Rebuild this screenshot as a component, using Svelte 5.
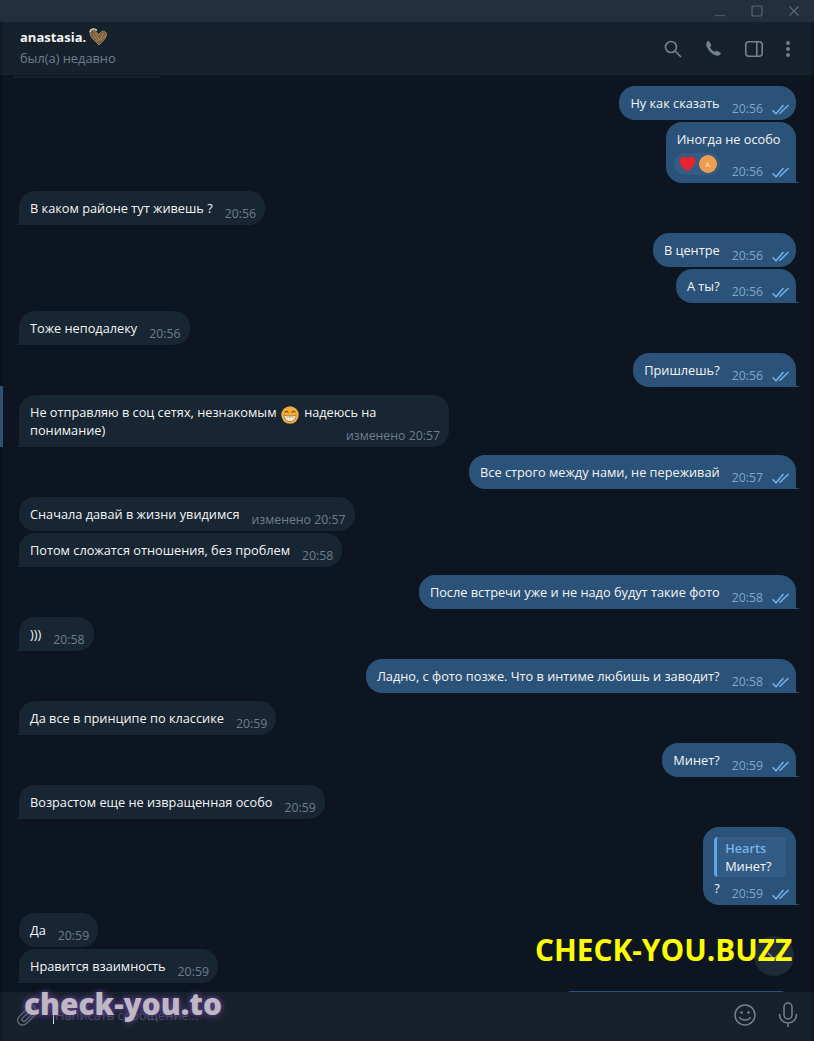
<script>
  const groups = [
    { side: 'r', items: [{ t: 'Ну как сказать', time: '20:56' }, { t: 'Иногда не особо', time: '20:56', react: true }] },
    { side: 'l', items: [{ t: 'В каком районе тут живешь ?', time: '20:56' }] },
    { side: 'r', items: [{ t: 'В центре', time: '20:56' }, { t: 'А ты?', time: '20:56' }] },
    { side: 'l', items: [{ t: 'Тоже неподалеку', time: '20:56' }] },
    { side: 'r', items: [{ t: 'Пришлешь?', time: '20:56' }] },
    { side: 'l', active: true, items: [{ multi: true, time: 'изменено 20:57' }] },
    { side: 'r', items: [{ t: 'Все строго между нами, не переживай', time: '20:57' }] },
    { side: 'l', items: [{ t: 'Сначала давай в жизни увидимся', time: 'изменено 20:57' }, { t: 'Потом сложатся отношения, без проблем', time: '20:58' }] },
    { side: 'r', items: [{ t: 'После встречи уже и не надо будут такие фото', time: '20:58' }] },
    { side: 'l', items: [{ t: ')))', time: '20:58' }] },
    { side: 'r', items: [{ t: 'Ладно, с фото позже. Что в интиме любишь и заводит?', time: '20:58' }] },
    { side: 'l', items: [{ t: 'Да все в принципе по классике', time: '20:59' }] },
    { side: 'r', items: [{ t: 'Минет?', time: '20:59' }] },
    { side: 'l', items: [{ t: 'Возрастом еще не извращенная особо', time: '20:59' }] },
    { side: 'r', items: [{ t: '?', time: '20:59', reply: true }] },
    { side: 'l', items: [{ t: 'Да', time: '20:59' }, { t: 'Нравится взаимность', time: '20:59' }] }
  ];
</script>

{#snippet checks()}
  <svg class="checks" viewBox="0 0 18 11" width="18" height="11" fill="none" stroke="currentColor" stroke-width="1.600">
    <path d="M0.600 6.200 L4 9.800 L11.500 1" /><path d="M7.500 9.800 L16.500 1" />
  </svg>
{/snippet}

<div class="app">
  <div class="titlebar">
    <svg width="12" height="12" viewBox="0 0 12 12"><path d="M1 10.500h10" stroke="#4a5866" stroke-width="1.200" /></svg>
    <svg width="12" height="12" viewBox="0 0 12 12"><rect x="1" y="1" width="10" height="10" rx="1.500" fill="none" stroke="#5b6875" stroke-width="1.200" /></svg>
    <svg width="12" height="12" viewBox="0 0 12 12"><path d="M1.500 1.500l9 9M10.500 1.500l-9 9" stroke="#5b6875" stroke-width="1.200" /></svg>
  </div>

  <header class="header">
    <div class="who">
      <div class="name">anastasia.
        <svg class="heart" width="20" height="19" viewBox="0 0 20 19">
          <path d="M11 18 C7 14 2 10 2 6 C2 3 6 2 8 4.500 C9 5.700 10 7 10.500 8 C12 5 15 3 17.500 5 C20 7.500 17 12 14.500 14.500 C13 16 12 17 11 18Z" fill="#7c5a36" stroke="#b9aa94" stroke-width="0.700" />
          <path d="M5 7 L10 15 M7 5.500 L12 14 M15 6 L11 14 M17.500 8 L13 13" stroke="#a98a62" stroke-width="1" />
          <path d="M1.800 5 C2.500 1.500 6.500 0.700 9 3.500" stroke="#e4e2dc" stroke-width="1.300" fill="none" />
        </svg>
      </div>
      <div class="status">был(а) недавно</div>
    </div>
    <div class="tools">
      <svg width="18" height="18" viewBox="0 0 18 18" fill="none" stroke="#75828f" stroke-width="1.600"><circle cx="7" cy="7" r="5.500" /><path d="M11 11l6 6" /></svg>
      <svg width="17" height="17" viewBox="0 0 20 20" fill="#75828f"><path d="M4.800 1.500 L7.300 5.800 C7.500 6.200 7.400 6.600 7.100 6.900 L5.800 8.200 C6.800 10.700 9 12.900 11.600 14 L13 12.700 C13.300 12.400 13.700 12.300 14.100 12.500 L18.300 14.900 C18.700 15.100 18.800 15.600 18.600 16 C17.700 17.700 16.200 18.600 14.700 18.400 C8.500 17.500 2.400 11.400 1.500 5.200 C1.300 3.600 2.300 2.100 4 1.300 C4.300 1.200 4.600 1.300 4.800 1.500Z" /></svg>
      <svg width="18" height="16" viewBox="0 0 18 16" fill="none" stroke="#75828f" stroke-width="1.600"><rect x="0.800" y="0.800" width="16.400" height="14.400" rx="3" /><path d="M11.800 1v14" /></svg>
      <svg width="4" height="16" viewBox="0 0 4 16" fill="#75828f"><circle cx="2" cy="2" r="1.900" /><circle cx="2" cy="8" r="1.900" /><circle cx="2" cy="14" r="1.900" /></svg>
    </div>
  </header>

  <div class="edge left"></div>
  <div class="edge right"></div>

  <main class="feed">
    <div class="peek"></div>
    {#each groups as g}
      <section class="group {g.side}" class:active={g.active}>
        {#each g.items as m}
          <div class="bubble" class:withreply={m.reply}>
            {#if m.reply}
              <div class="reply"><b>Hearts</b><span>Минет?</span></div>
              <div class="replyfoot"><span class="txt q">{m.t}</span><span class="meta"><span class="time">{m.time}</span>{@render checks()}</span></div>
            {:else if m.multi}
              <div class="txt wide">Не отправляю в соц сетях, незнакомым <svg class="emoji" width="18" height="18" viewBox="0 0 18 18"><circle cx="9" cy="9" r="8.700" fill="#f2ad3a" /><path d="M3 9 C6 10.500 12 10.500 15 9 C14.800 13.500 12 15.500 9 15.500 C6 15.500 3.200 13.500 3 9Z" fill="#fdf6e8" stroke="#8a5a1c" stroke-width="0.700" /><path d="M3 11.600 H15 M6 10 V15 M9 10.300 V15.500 M12 10 V15" stroke="#c9b79a" stroke-width="0.500" /><path d="M3.800 6.800 C4.500 4.800 6.500 4.800 7.200 6.800 M10.800 6.800 C11.500 4.800 13.500 4.800 14.200 6.800" fill="none" stroke="#6d4413" stroke-width="1.100" /></svg> надеюсь на<br />понимание)</div>
              <div class="metarow"><span class="time">{m.time}</span></div>
            {:else if m.react}
              <div class="txt solo">{m.t}</div>
              <div class="reactrow">
                <div class="pill">
                  <svg width="17" height="16" viewBox="0 0 16 15"><path d="M8 14.500 C4 11 .5 8.500 .5 4.800 C.5 2.200 2.500 .5 4.500 .5 C6 .5 7.300 1.300 8 2.700 C8.700 1.300 10 .5 11.500 .5 C13.500 .5 15.500 2.200 15.500 4.800 C15.500 8.500 12 11 8 14.500Z" fill="#e8232f" /></svg>
                  <span class="avatar">А</span>
                </div>
                <span class="meta low"><span class="time">{m.time}</span>{@render checks()}</span>
              </div>
            {:else}
              <div class="line"><span class="txt">{m.t}</span><span class="meta"><span class="time">{m.time}</span>{#if g.side === 'r'}{@render checks()}{/if}</span></div>
            {/if}
          </div>
        {/each}
      </section>
    {/each}
    <div class="stub"></div>
    <div class="scroll">
      <svg width="16" height="10" viewBox="0 0 16 10" fill="none" stroke="#8996a3" stroke-width="1.500"><path d="M2 2l6 6 6-6" /></svg>
    </div>
    <div class="mark-yellow">CHECK-YOU.BUZZ</div>
  </main>

  <footer class="composer">
    <svg class="clip" width="24" height="24" viewBox="0 0 24 24" fill="none" stroke="#5d6a77" stroke-width="1.500"><path d="M20.500 10.500 L11 20 C8.500 22.500 4.700 22.500 3 20.500 C1.200 18.500 1.500 15.300 3.500 13.300 L13 3.800 C14.600 2.200 17 2.200 18.500 3.700 C20 5.200 19.800 7.500 18.300 9 L9.500 17.800 C8.600 18.700 7.300 18.700 6.500 17.900 C5.700 17 5.900 15.800 6.700 15 L14.500 7.200" /></svg>
    <span class="caret"></span>
    <span class="placeholder">Написать сообщение...</span>
    <svg class="smile" width="24" height="24" viewBox="0 0 24 24" fill="none" stroke="#75828f" stroke-width="1.500"><circle cx="12" cy="12" r="10" /><circle cx="8.500" cy="9.500" r="1.300" fill="#75828f" stroke="none" /><circle cx="15.500" cy="9.500" r="1.300" fill="#75828f" stroke="none" /><path d="M6.500 14 C8 18 16 18 17.500 14" /></svg>
    <svg class="mic" width="22" height="26" viewBox="0 0 22 26" fill="none" stroke="#75828f" stroke-width="1.500"><rect x="7" y="1" width="8" height="16" rx="4" /><path d="M2.500 12 C2.500 24 19.500 24 19.500 12 M11 21v4" /></svg>
  </footer>
  <div class="mark-glow">check-you.to</div>
</div>

<style>
  :global(body) { margin: 0; background: #0d1520; }
  .app {
    width: 814px; height: 1041px; overflow: hidden; display: flex; flex-direction: column; position: relative;
    font-family: "Open Sans", "Noto Sans", sans-serif; font-size: 12.750px; color: #f5f5f5; background: #0d1520;
  }
  .titlebar {
    height: 22px; flex: none; display: flex; justify-content: flex-end; align-items: center; gap: 25px; padding-right: 14px; box-sizing: border-box;
    background: #232f3c;
  }
  .header {
    height: 54px; flex: none; display: flex; justify-content: space-between; align-items: center;
    padding: 0 24px 0 20px; background: #17212b; border-bottom: 1px solid #10171f; box-sizing: border-box;
  }
  .edge { position: absolute; top: 22px; bottom: 0; width: 3px; background: rgba(5, 10, 16, 0.3); }
  .edge.left { left: 0; }
  .edge.right { right: 0; }
  .who { margin-top: -2px; }
  .name { font-weight: 700; font-size: 13px; line-height: 20px; display: flex; align-items: center; gap: 2px; }
  .heart { margin-top: -3px; height: 19px; margin-bottom: -2px; }
  .status { font-size: 12.800px; line-height: 20px; color: #6d7f8f; margin-top: 1px; }
  .tools { display: flex; align-items: center; gap: 23px; }
  .feed { flex: 1; position: relative; overflow: hidden; padding: 10px 0 0; box-sizing: border-box; }
  .peek { position: absolute; left: 14px; top: 0; width: 146px; height: 2px; background: #17212b; border-radius: 0 0 6px 0; }
  .group { display: flex; flex-direction: column; gap: 2px; margin-bottom: 8px; position: relative; }
  .group.l { align-items: flex-start; padding-left: 19px; }
  .group.r { align-items: flex-end; padding-right: 18px; }
  .group.active::before { content: ""; position: absolute; left: 0; top: -9px; bottom: 0; width: 3px; background: #2b5278; }
  .bubble { min-height: 34px; box-sizing: border-box; padding: 8px 9px 8px 11px; border-radius: 16px; position: relative; }
  .l .bubble { background: #182533; }
  .r .bubble { background: #2b5278; padding-right: 6px; }
  .l .bubble:last-child { border-bottom-left-radius: 0; }
  .l .bubble:last-child::after { content: ""; position: absolute; bottom: 0; left: -5px; width: 5px; height: 10px; background: radial-gradient(circle at 0 0, transparent 9.500px, #182533 10px); }
  .r .bubble:last-child { border-bottom-right-radius: 0; }
  .r .bubble:last-child::after { content: ""; position: absolute; bottom: 0; right: -5px; width: 5px; height: 10px; background: radial-gradient(circle at 100% 0, transparent 9.500px, #2b5278 10px); }
  .line { display: flex; height: 18px; }
  .txt { line-height: 18px; white-space: nowrap; }
  .meta { display: inline-flex; align-items: center; margin-left: 12px; margin-top: 8px; height: 14px; flex: none; }
  .meta.low { margin-top: 0; margin-bottom: -4px; }
  .time { font-size: 12.300px; line-height: 14px; color: #6d7f8f; }
  .r .time { color: #7da8d3; }
  .checks { color: #6cb0ea; margin-left: 9px; flex: none; }
  .emoji { vertical-align: -4px; margin: -3px 2px -3px 1px; }
  .metarow { display: flex; justify-content: flex-end; margin-top: -10px; height: 14px; margin-bottom: -4px; }
  .wide { width: 410px; }
  .solo { padding-right: 8px; }
  .reactrow { display: flex; justify-content: space-between; align-items: flex-end; margin-top: 5px; height: 22px; }
  .pill { display: flex; align-items: center; gap: 3px; height: 22px; padding: 0 3px 0 5px; margin-left: -3px; border-radius: 11px; background: #345c85; }
  .avatar { width: 18px; height: 18px; border-radius: 50%; background: #ee9c50; color: #fde6cf; font-size: 7px; display: flex; align-items: center; justify-content: center; }
  .bubble.withreply { padding-top: 10px; padding-bottom: 0; height: 78px; }
  .reply { display: flex; flex-direction: column; line-height: 18px; height: 40px; box-sizing: border-box; padding: 2px 12px 2px 8px; margin-right: 4px; background: #325c85; border-left: 3px solid #5fa8e8; border-radius: 4px; }
  .reply b { color: #78b4ec; font-weight: 600; }
  .replyfoot { display: flex; align-items: flex-start; justify-content: space-between; margin-top: 2px; }
  .scroll { position: absolute; left: 754px; top: 860px; width: 40px; height: 40px; border-radius: 50%; background: #1e2a36; display: flex; align-items: center; justify-content: center; }
  .stub { position: absolute; left: 565px; top: 915px; width: 222px; height: 6px; background: #2b5278; border-radius: 6px 6px 0 0; }
  .mark-yellow { position: absolute; left: 535px; top: 854px; font-size: 29.800px; line-height: 40px; font-weight: 700; color: #fcfc05; white-space: nowrap; }
  .composer { height: 49px; flex: none; background: #17212b; display: flex; align-items: center; box-sizing: border-box; padding: 0 14px 3px 16px; }
  .clip { flex: none; }
  .caret { width: 1px; height: 18px; background: #e8e8e8; margin: 0 0 0 13px; flex: none; }
  .placeholder { color: #4a5763; margin: 0 0 0 1px; flex: 1; }
  .smile { margin: 0 20px 0 0; flex: none; }
  .mic { flex: none; margin-right: 1px; }
  .mark-glow {
    position: absolute; left: 24px; top: 986px; font-size: 29.800px; line-height: 36px; font-weight: 800; color: #bdb8c2; white-space: nowrap;
    text-shadow: 0 0 5px #5f4392, 0 0 10px #4d3579;
  }
</style>
